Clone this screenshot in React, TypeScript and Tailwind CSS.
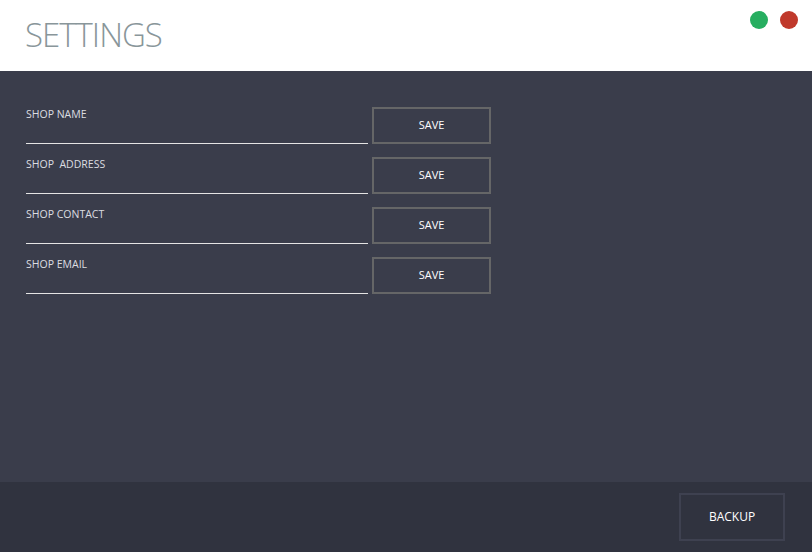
import React from "react";

const fields = ["SHOP NAME", "SHOP  ADDRESS", "SHOP CONTACT", "SHOP EMAIL"];

export default function App() {
  return (
    <div
      className="w-[812px] h-[552px] flex flex-col overflow-hidden"
      style={{ fontFamily: '"Open Sans", "Noto Sans", sans-serif' }}
    >
      <header className="h-[71px] bg-white flex items-start justify-between shrink-0">
        <h1 className="ml-[25px] mt-[15px] text-[33px] leading-[40px] font-light text-[#89969a] tracking-[-1px]">
          SETTINGS
        </h1>
        <div className="flex gap-[12px] mt-[11px] mr-[14px]">
          <span className="w-[18px] h-[18px] rounded-full bg-[#27ae60]" />
          <span className="w-[18px] h-[18px] rounded-full bg-[#c0392b]" />
        </div>
      </header>
      <main className="flex-1 bg-[#3a3d4b] pt-[36px] pl-[26px] flex flex-col gap-[13px]">
        {fields.map((f) => (
          <div key={f} className="flex items-start gap-[4px]">
            <div className="w-[342px] h-[37px] border-b border-[#e4e4e4]">
              <div className="text-[10.5px] leading-[13px] mt-[1px] text-[#dcdde1] whitespace-pre">{f}</div>
            </div>
            <button className="w-[119px] h-[37px] border-2 border-[#656667] text-white text-[11px] leading-none pb-[2px]">
              SAVE
            </button>
          </div>
        ))}
      </main>
      <footer className="h-[70px] bg-[#30333f] shrink-0 flex justify-end items-start">
        <button className="mt-[11px] mr-[27px] w-[106px] h-[48px] border-2 border-[#3e4150] text-white text-[12px]">
          BACKUP
        </button>
      </footer>
    </div>
  );
}
